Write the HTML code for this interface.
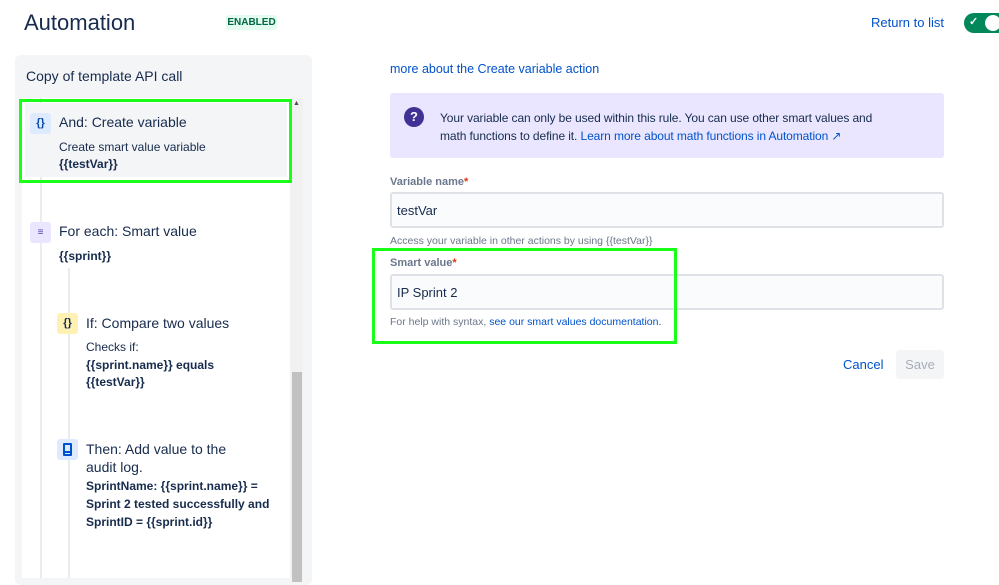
<!DOCTYPE html>
<html><head><style>
*{margin:0;padding:0;box-sizing:border-box}
body{width:999px;height:575px;overflow:hidden;background:#fff;font-family:"Liberation Sans",sans-serif;color:#172b4d;position:relative}
.a{position:absolute;white-space:nowrap}
.ic{position:absolute;width:21px;height:21px;border-radius:3px;font-size:11px;font-weight:bold;text-align:center;line-height:21px}
.t14{font-size:14px}.t12{font-size:12px}
b{font-weight:bold}
</style></head><body>
<div class="a" style="left:24px;top:10px;font-size:22px;color:#172b4d">Automation</div>
<div class="a" style="left:226px;top:15px;width:51px;height:15px;background:#e3fcef;color:#006644;font-size:10px;font-weight:bold;text-align:center;line-height:15px;border-radius:3px">ENABLED</div>
<div class="a" style="left:871px;top:15px;font-size:13px;color:#0052cc">Return to list</div>
<div class="a" style="left:964px;top:13px;width:44px;height:20px;border-radius:10px;background:#00875a"></div>
<div class="a" style="left:969px;top:15px;color:#fff;font-size:11px;font-weight:bold">✓</div>
<div class="a" style="left:985px;top:15px;width:16px;height:16px;border-radius:8px;background:#fff"></div>

<div class="a" style="left:15px;top:55px;width:297px;height:530px;background:#f4f5f7;border-radius:6px"></div>
<div class="a" style="left:26px;top:68px;font-size:14px">Copy of template API call</div>
<div class="a" style="left:22px;top:98px;width:268px;height:480px;background:#fff"></div>
<div class="a" style="left:290px;top:98px;width:13px;height:480px;background:#f1f1f1"></div>
<div class="a" style="left:292px;top:372px;width:10px;height:210px;background:#c1c1c1"></div>
<div class="a" style="left:293px;top:100px;font-size:7px;color:#505050">▲</div>
<div class="a" style="left:40px;top:98px;width:2px;height:480px;background:#ebecf0"></div>
<div class="a" style="left:68px;top:268px;width:2px;height:310px;background:#ebecf0"></div>

<div class="a" style="left:25px;top:103px;width:262px;height:74px;background:#f4f5f7"></div>
<div class="a" style="left:19px;top:99px;width:273px;height:84px;border:3px solid #1aff1a"></div>
<div class="ic" style="left:30px;top:113px;background:#deebff;color:#0747a6">{}</div>
<div class="a t14" style="left:59px;top:114px">And: Create variable</div>
<div class="a t12" style="left:59px;top:140px">Create smart value variable</div>
<div class="a t12" style="left:59px;top:157px"><b>{{testVar}}</b></div>

<div class="ic" style="left:30px;top:222px;background:#eae6ff;color:#5243aa;font-size:10px">≡</div>
<div class="a t14" style="left:59px;top:223px">For each: Smart value</div>
<div class="a t12" style="left:59px;top:249px"><b>{{sprint}}</b></div>

<div class="ic" style="left:57px;top:313px;background:#fff0b3;color:#172b4d">{}</div>
<div class="a t14" style="left:86px;top:315px">If: Compare two values</div>
<div class="a t12" style="left:86px;top:340px">Checks if:</div>
<div class="a t12" style="left:86px;top:358px"><b>{{sprint.name}} equals</b></div>
<div class="a t12" style="left:86px;top:375px"><b>{{testVar}}</b></div>

<div class="ic" style="left:57px;top:439px;background:#deebff"><div style="position:absolute;left:6px;top:4px;width:9px;height:13px;border:2px solid #0052cc;border-radius:1px"></div><div style="position:absolute;left:8px;top:12px;width:5px;height:2px;background:#0052cc"></div></div>
<div class="a t14" style="left:86px;top:440px;line-height:18px">Then: Add value to the<br>audit log.</div>
<div class="a t12" style="left:86px;top:477px;line-height:18px"><b>SprintName: {{sprint.name}} =<br>Sprint 2 tested successfully and<br>SprintID = {{sprint.id}}</b></div>

<div class="a" style="left:390px;top:62px;font-size:12.5px;color:#0052cc">more about the Create variable action</div>
<div class="a" style="left:390px;top:93px;width:554px;height:65px;background:#eae6ff;border-radius:3px"></div>
<div class="a" style="left:404px;top:107px;width:20px;height:20px;border-radius:10px;background:#403294;color:#fff;font-size:13px;font-weight:bold;text-align:center;line-height:20px">?</div>
<div class="a" style="left:440px;top:109px;font-size:12px;line-height:18px;letter-spacing:-0.1px">Your variable can only be used within this rule. You can use other smart values and<br>math functions to define it. <span style="color:#0052cc">Learn more about math functions in Automation ↗</span></div>

<div class="a" style="left:390px;top:176px;font-size:11px;color:#6b778c;font-weight:bold">Variable name<span style="color:#de350b">*</span></div>
<div class="a" style="left:390px;top:192px;width:554px;height:36px;background:#fafbfc;border:2px solid #dfe1e6;border-radius:3px"></div>
<div class="a" style="left:397px;top:203px;font-size:13px">testVar</div>
<div class="a" style="left:390px;top:235px;font-size:10.5px;color:#6b778c">Access your variable in other actions by using {{testVar}}</div>
<div class="a" style="left:390px;top:257px;font-size:11px;color:#6b778c;font-weight:bold">Smart value<span style="color:#de350b">*</span></div>
<div class="a" style="left:390px;top:274px;width:554px;height:36px;background:#fafbfc;border:2px solid #dfe1e6;border-radius:3px"></div>
<div class="a" style="left:397px;top:285px;font-size:13px">IP Sprint 2</div>
<div class="a" style="left:390px;top:316px;font-size:10.5px;color:#6b778c">For help with syntax, <span style="color:#0052cc">see our smart values documentation.</span></div>
<div class="a" style="left:372px;top:248px;width:305px;height:96px;border:3px solid #1aff1a"></div>

<div class="a" style="left:843px;top:357px;font-size:13px;color:#0052cc">Cancel</div>
<div class="a" style="left:896px;top:350px;width:48px;height:29px;background:#f4f5f7;border-radius:3px;color:#a5adba;font-size:13px;text-align:center;line-height:29px">Save</div>
</body></html>
